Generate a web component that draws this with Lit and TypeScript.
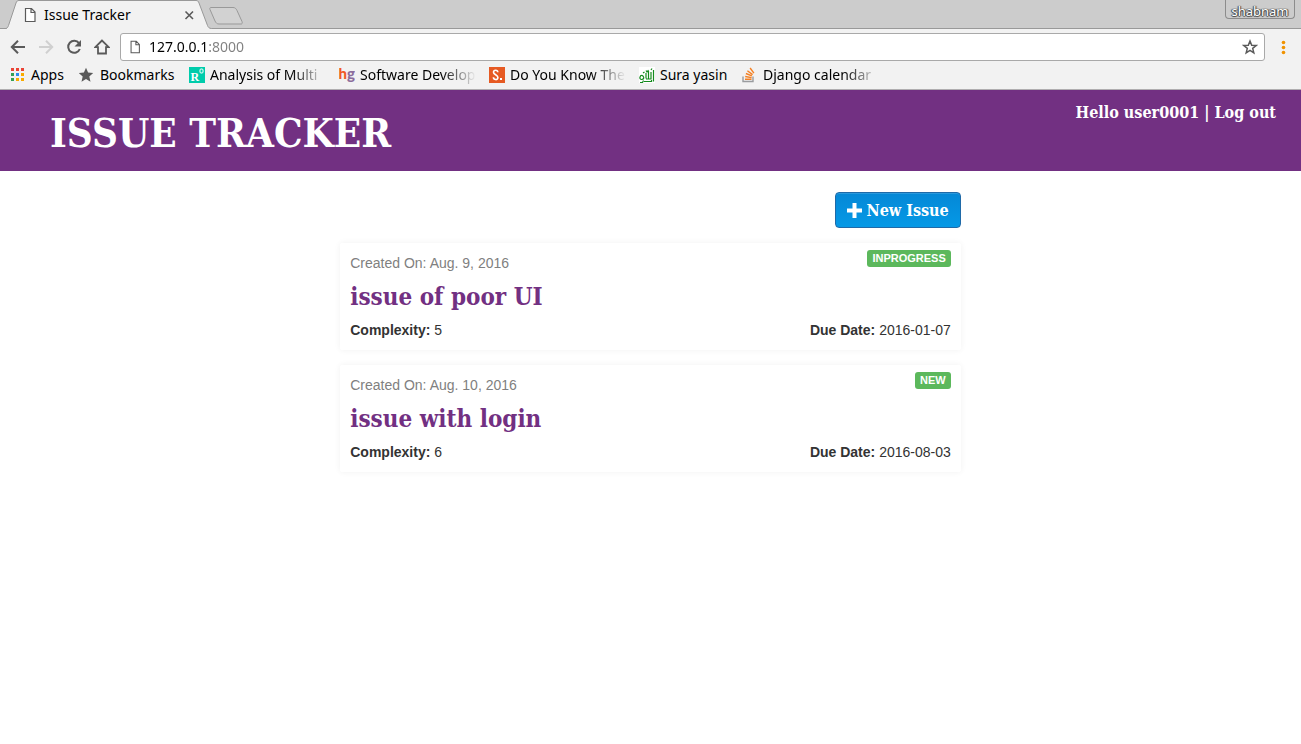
import { LitElement, html, css, svg, TemplateResult } from "lit";
import { customElement, property } from "lit/decorators.js";

interface Issue {
  created: string;
  title: string;
  complexity: number;
  due: string;
  status: string;
}

interface Bookmark {
  label: string;
  icon: TemplateResult;
  fade?: boolean;
}

const issues: Issue[] = [
  { created: "Aug. 9, 2016", title: "issue of poor UI", complexity: 5, due: "2016-01-07", status: "INPROGRESS" },
  { created: "Aug. 10, 2016", title: "issue with login", complexity: 6, due: "2016-08-03", status: "NEW" },
];

const appColours = ["#ea4335", "#ea4335", "#ea4335", "#34a056", "#2d8cf0", "#f9ab00", "#34a056", "#f9ab00", "#f9ab00"];

const icon = (body: TemplateResult, size = 16) =>
  html`<svg class="icon" width=${size} height=${size} viewBox="0 0 16 16" aria-hidden="true">${body}</svg>`;

const page = svg`<path d="M3.5 1.500h6l3.500 3.500v9.500h-9.500z M9 1.500v4h4" fill="#fff" stroke="#5a5a5a" stroke-width="1.200"/>`;

const bookmarks: Bookmark[] = [
  {
    label: "Apps",
    icon: icon(svg`${appColours.map(
      (c, i) => svg`<rect x=${1 + (i % 3) * 5} y=${1 + Math.floor(i / 3) * 5} width="3" height="3" fill=${c}/>`
    )}`),
  },
  {
    label: "Bookmarks",
    icon: icon(svg`<path d="M7 .8l2.100 4.800 5.100.5-3.900 3.400 1.200 5.200L7 12l-4.500 2.700 1.200-5.200L-.2 6.100l5.100-.5z" fill="#5a5a5a"/>`),
  },
  {
    label: "Analysis of Multi",
    fade: true,
    icon: icon(svg`<rect width="16" height="16" fill="#00ccab"/>
      <text x="1.500" y="14" font-family="Liberation Serif" font-weight="700" font-size="12" fill="#fff">R</text>
      <rect x="11" y="2" width="3" height="4" rx="1" fill="none" stroke="#fff"/>`),
  },
  {
    label: "Software Develop",
    fade: true,
    icon: icon(svg`<text x="-.5" y="11.500" font-family="Lato" font-weight="900" font-size="15" fill="#f05a28">h</text>
      <text x="8" y="11.500" font-family="Lato" font-weight="900" font-size="15" fill="#8c6d9c">g</text>`),
  },
  {
    label: "Do You Know The",
    fade: true,
    icon: icon(svg`<rect width="16" height="16" fill="#e65a23"/>
      <path d="M8.800 5.300C8.700 2.500 4.500 2.500 4.500 5.300c0 2.500 4.400 2.500 4.400 5.200 0 2.800-4.400 2.800-4.500-.2" fill="none" stroke="#fff" stroke-width="1.600"/>
      <rect x="11" y="11" width="2" height="2" fill="#fff"/>`),
  },
  {
    label: "Sura yasin",
    icon: icon(svg`<rect width="16" height="16" fill="#fff"/>
      <path d="M14.500 3v11.500M12 5v7.500M9.500 4v8M7 6v5.500M7 12h5M3.500 8.500c-3-.5-3.500 4-1 4s3-2 1-4M1 15.500h2.500l1-2M5 14.500h7.500V13M7 3.500l1 1.500 1.500-2M12 3l1-1.500M4 6l1.500-1" fill="none" stroke="#138a1c" stroke-width="1.200"/>`),
  },
  {
    label: "Django calendar",
    fade: true,
    icon: icon(svg`<path d="M1 9.500v5h10v-5" fill="none" stroke="#9a9c9f" stroke-width="1.400"/>
      <path d="M3 12.300h6.500M3.200 9.500l6.400 1.100M3.900 6.500l6 2.300M5.400 3.700l5.200 3.900M8.100 1l3.800 5.200" fill="none" stroke="#f48024" stroke-width="1.400"/>`),
  },
];

@customElement("browser-chrome")
class BrowserChrome extends LitElement {
  static styles = css`
    :host {
      display: block;
      font-family: "Noto Sans", sans-serif;
      font-size: 14px;
      line-height: 20px;
      color: #000;
      background: #f2f2f2;
      border-bottom: 1px solid #b0aeb0;
    }
    button {
      display: flex;
      align-items: center;
      justify-content: center;
      padding: 0;
      border: 0;
      background: none;
      font: inherit;
      color: inherit;
    }
    .icon {
      display: block;
      flex: none;
    }
    .strip {
      display: flex;
      height: 28px;
      padding-left: 6px;
      background: #ccc;
      border-bottom: 1px solid #999;
    }
    .tab {
      position: relative;
      display: flex;
      align-items: center;
      box-sizing: border-box;
      width: 206px;
      height: 29px;
      padding: 0 15px 0 16px;
      gap: 6px;
    }
    .shape {
      position: absolute;
      inset: 0;
    }
    .tab .icon,
    .title,
    .close {
      z-index: 1;
    }
    .title {
      flex: 1;
    }
    .close {
      width: 16px;
      height: 16px;
    }
    .add {
      width: 36px;
      height: 29px;
      margin-left: -4px;
    }
    .user {
      box-sizing: border-box;
      width: 70px;
      height: 19px;
      margin: 0 6px 0 auto;
      padding-top: 3px;
      border: 1px solid #8c8c8c;
      border-top: 0;
      border-radius: 0 0 4px 4px;
      font-size: 13px;
      color: #fff;
      text-shadow: 0 0 1px #444, 0 1px 1px #444, 1px 0 1px #444, -1px 0 1px #444;
    }
    .toolbar {
      display: flex;
      height: 28px;
      padding: 4px 0 0 4px;
    }
    .toolbar > button {
      width: 28px;
    }
    .toolbar > .menu {
      width: 36px;
    }
    .omnibox {
      display: flex;
      align-items: center;
      flex: 1;
      box-sizing: border-box;
      margin-left: 4px;
      padding: 0 6px 0 7px;
      gap: 7px;
      border: 1px solid #a9a9a9;
      border-radius: 3px;
      background: #fff;
    }
    .url {
      flex: 1;
      min-width: 0;
      padding: 0;
      border: 0;
      outline: 0;
      font: inherit;
      line-height: 20px;
      color: transparent;
      background: linear-gradient(to right, #000 57px, #808080 57px);
      background-clip: text;
      -webkit-background-clip: text;
    }
    .bookmarks {
      display: grid;
      grid-template-columns: 56px 97px 137px 137px 137px 90px 137px;
      column-gap: 13px;
      padding: 4px 10px;
    }
    .bookmark {
      display: flex;
      align-items: center;
      gap: 5px;
      min-width: 0;
      color: inherit;
      text-decoration: none;
      white-space: nowrap;
    }
    .label {
      flex: 1;
    }
    .fade {
      mask-image: linear-gradient(to right, #000 70%, transparent);
    }
  `;

  render() {
    return html`
      <div class="strip">
        <div class="tab">
          <svg class="shape" width="206" height="29" aria-hidden="true">
            <path d="M0 29c1.500-1 2-2 2.500-3.500L10 3c.7-2 1.500-2.500 3-2.500h177c1.500 0 2.300.5 3 2.500l8.500 22.500c.6 1.500 1.500 3 4 3v.5z" fill="#f2f2f2"/>
            <path d="M0 28.500c1.500-.5 2-1.500 2.500-3L10 3c.7-2 1.500-2.500 3-2.500h177c1.500 0 2.300.5 3 2.500l8.500 22.500c.6 1.500 1.500 3 4 3" fill="none" stroke="#999"/>
          </svg>
          ${icon(page)}
          <span class="title">Issue Tracker</span>
          <button class="close" aria-label="Close tab">
            ${icon(svg`<path d="M4.500 4.500l7.500 7.500M12 4.500l-7.500 7.500" stroke="#5a5a5a" stroke-width="1.600"/>`)}
          </button>
        </div>
        <button class="add" aria-label="New tab">
          <svg class="icon" width="36" height="29" aria-hidden="true">
            <path d="M3 7.500h22c2 0 3 1 4 3l5 11c.6 2 0 2.500-1 2.500H11c-2 0-3-1-4-3L2 9.500c-.5-1.500 0-2 1-2z" fill="#d2d2d2" stroke="#999"/>
          </svg>
        </button>
        <button class="user">shabnam</button>
      </div>
      <div class="toolbar">
        <button aria-label="Back">${icon(svg`<path d="M15 8H2M8 1.800L1.800 8 8 14.200" fill="none" stroke="#5a5a5a" stroke-width="2"/>`)}</button>
        <button aria-label="Forward">${icon(svg`<path d="M1 8h13M8 1.800L14.200 8 8 14.200" fill="none" stroke="#d0d0d0" stroke-width="2"/>`)}</button>
        <button aria-label="Reload">
          ${icon(svg`<path d="M13 4.200A6 6 0 1 0 13.800 10" fill="none" stroke="#5a5a5a" stroke-width="2"/><path d="M15 1v6.500H8.500z" fill="#5a5a5a"/>`)}
        </button>
        <button aria-label="Home">
          ${icon(svg`<path d="M8 1.500L1.300 8.200H4v6.300h8V8.200h2.700z" fill="none" stroke="#5a5a5a" stroke-width="1.800"/>`)}
        </button>
        <div class="omnibox">
          ${icon(page, 14)}
          <input class="url" aria-label="Address" value="127.0.0.1:8000" />
          <button aria-label="Bookmark this page">
            ${icon(svg`<path d="M8 2l1.700 4.200 4.500.3-3.500 2.900 1.100 4.400L8 11.400l-3.800 2.400 1.100-4.400-3.500-2.900 4.500-.3z" fill="none" stroke="#5a5a5a" stroke-width="1.500"/>`)}
          </button>
        </div>
        <button class="menu" aria-label="Menu">
          ${icon(svg`<g fill="#f09300"><circle cx="8.500" cy="3.500" r="1.800"/><circle cx="8.500" cy="8.500" r="1.800"/><circle cx="8.500" cy="13.500" r="1.800"/></g>`)}
        </button>
      </div>
      <nav class="bookmarks" aria-label="Bookmarks">
        ${bookmarks.map(
          (b) => html`<a class="bookmark" href="#">${b.icon}<span class="label ${b.fade ? "fade" : ""}">${b.label}</span></a>`
        )}
      </nav>
    `;
  }
}

@customElement("issue-card")
class IssueCard extends LitElement {
  static styles = css`
    :host {
      display: block;
      padding: 10px;
      border-radius: 2px;
      background: #fff;
      box-shadow: 0 0 6px rgba(0, 0, 0, 0.06);
    }
    .row {
      display: flex;
      justify-content: space-between;
      align-items: flex-start;
    }
    .created {
      color: #808080;
    }
    .status {
      margin-top: -3px;
      padding: 3px 5px;
      border-radius: 3px;
      background: #5cb85c;
      color: #fff;
      font-size: 11px;
      font-weight: 700;
      line-height: 11px;
    }
    .title {
      margin: 10px 0;
      font-family: "DejaVu Serif Condensed", "DejaVu Serif", serif;
      font-size: 24px;
      font-weight: 700;
      line-height: 27px;
    }
    .link {
      color: #723082;
      text-decoration: none;
    }
  `;

  @property({ attribute: false }) issue!: Issue;

  render() {
    const { created, title, complexity, due, status } = this.issue;
    return html`
      <div class="row">
        <span class="created">Created On: ${created}</span>
        <span class="status">${status}</span>
      </div>
      <h2 class="title"><a class="link" href="#">${title}</a></h2>
      <div class="row">
        <span><b>Complexity:</b> ${complexity}</span>
        <span><b>Due Date:</b> ${due}</span>
      </div>
    `;
  }
}

@customElement("app-root")
class AppRoot extends LitElement {
  static styles = css`
    :host {
      display: block;
      min-height: 100vh;
      background: #fff;
      color: #333;
      font-family: "Liberation Sans", Arial, sans-serif;
      font-size: 14px;
      line-height: 20px;
    }
    .header,
    .new {
      font-family: "DejaVu Serif Condensed", "DejaVu Serif", serif;
      font-weight: 700;
      color: #fff;
    }
    .header {
      display: flex;
      justify-content: space-between;
      align-items: flex-start;
      padding: 13px 25px 8px 50px;
      background: #723082;
    }
    .brand {
      margin: 0;
      font-size: 40px;
      line-height: 60px;
    }
    .account {
      font-size: 16px;
    }
    .logout {
      color: inherit;
      text-decoration: none;
    }
    .main {
      display: flex;
      flex-direction: column;
      gap: 15px;
      box-sizing: border-box;
      width: 50%;
      margin: 0 auto;
      padding: 21px 15px;
    }
    .new {
      display: flex;
      align-items: center;
      align-self: flex-end;
      gap: 4px;
      height: 36px;
      padding: 0 11px;
      border: 1px solid #1f6aa8;
      border-radius: 4px;
      background: linear-gradient(#0588d6, #0599e6);
      box-shadow: inset 0 1px 0 rgba(255, 255, 255, 0.15);
      font-size: 16px;
    }
  `;

  render() {
    return html`
      <browser-chrome></browser-chrome>
      <header class="header">
        <h1 class="brand">ISSUE TRACKER</h1>
        <div class="account">Hello user0001 | <a class="logout" href="#">Log out</a></div>
      </header>
      <main class="main">
        <button class="new">
          <svg width="15" height="15" viewBox="0 0 15 15" aria-hidden="true">
            <path d="M5.500 0h4v5.500H15v4H9.500V15h-4V9.500H0v-4h5.500z" fill="#fff"/>
          </svg>
          New Issue
        </button>
        ${issues.map((issue) => html`<issue-card .issue=${issue}></issue-card>`)}
      </main>
    `;
  }
}
